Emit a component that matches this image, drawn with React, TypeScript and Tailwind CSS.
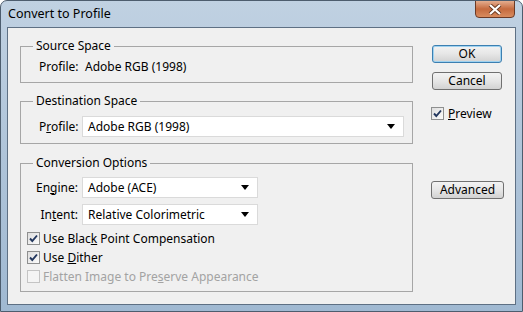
import React from "react"

const font = { fontFamily: '"Noto Sans", "Open Sans", sans-serif' }

function CheckBox({ checked, disabled }: { checked?: boolean; disabled?: boolean }) {
  return (
    <span
      className={
        "w-[13px] h-[13px] shrink-0 flex items-center justify-center border " +
        (disabled
          ? "border-[#c4c4c4] bg-[#f4f4f4]"
          : "border-[#8e8f8f] bg-gradient-to-br from-[#dedede] to-[#fbfbfb]")
      }
    >
      {checked && (
        <svg width="11" height="11" viewBox="0 0 11 11">
          <path d="M2 5.5 L4.3 8 L9 2.5" fill="none" stroke="#23375e" strokeWidth="1.9" />
        </svg>
      )}
    </span>
  )
}

function Button({ label, primary, w }: { label: string; primary?: boolean; w: string }) {
  return (
    <div
      className={
        "h-[18px] rounded-[3px] border flex items-center justify-center text-[12px] leading-none bg-gradient-to-b from-[#f3f3f3] via-[#e6e6e6] to-[#d2d2d2] " +
        w +
        (primary ? " border-[#3c7fb1] shadow-[inset_0_0_0_1px_#9fd2f0]" : " border-[#707070]")
      }
    >
      {label}
    </div>
  )
}

function Select({ value, w }: { value: string; w: string }) {
  return (
    <div className={"h-[21px] bg-white border border-[#dadada] flex items-center justify-between pl-[5px] pr-[8px] " + w}>
      <span>{value}</span>
      <svg width="8" height="5" viewBox="0 0 8 5">
        <path d="M0 0 H8 L4 5 Z" fill="#000" />
      </svg>
    </div>
  )
}

function Group({ title, h, children }: { title: string; h: string; children: React.ReactNode }) {
  return (
    <fieldset className={"w-[393px] border border-[#a6a6a6] " + h}>
      <legend className="ml-[12px] px-[3px] leading-[16px]">{title}</legend>
      {children}
    </fieldset>
  )
}

export default function App() {
  return (
    <div
      style={font}
      className="w-[523px] h-[312px] flex flex-col rounded-t-[7px] border border-[#4d5d6e] bg-gradient-to-b from-[#c0d1e2] via-[#afc4d9] to-[#a0b9d2] text-[12px] text-black overflow-hidden"
    >
      <div className="h-[26px] flex justify-between items-start pl-[7px] pr-[7px]">
        <span className="mt-[5px] leading-[16px] text-[12.5px]">Convert to Profile</span>
        <div className="mt-[-1px] w-[40px] h-[18px] rounded-b-[4px] border border-[#6b3a26] bg-gradient-to-b from-[#e4ad8e] via-[#c56a3e] to-[#d98c5f] flex items-center justify-center">
          <svg width="14" height="11" viewBox="0 0 14 11">
            <path d="M2 1 L12 10 M12 1 L2 10" stroke="#6a3a22" strokeWidth="4" />
            <path d="M2 1 L12 10 M12 1 L2 10" stroke="#fff" strokeWidth="2.2" />
          </svg>
        </div>
      </div>
      <div className="mx-[6px] mb-[6px] flex-1 border border-[#5e7084] bg-[#f0f0f0] flex">
        <div className="pl-[12px] pt-[10px] flex flex-col">
          <Group title="Source Space" h="h-[45px]">
            <div className="mt-[5px] pl-[18px] flex leading-[16px]">
              <span className="w-[46px]">Profile:</span>
              <span>Adobe RGB (1998)</span>
            </div>
          </Group>
          <div className="h-[10px]" />
          <Group title="Destination Space" h="h-[51px]">
            <div className="mt-[7px] pl-[18px] flex items-center">
              <span className="w-[43px]">
                P<u>r</u>ofile:
              </span>
              <Select value="Adobe RGB (1998)" w="w-[322px]" />
            </div>
          </Group>
          <div className="h-[11px]" />
          <Group title="Conversion Options" h="h-[137px]">
            <div className="mt-[6px] flex items-center">
              <span className="w-[57px] text-right">
                En<u>g</u>ine:
              </span>
              <Select value="Adobe (ACE)" w="ml-[4px] w-[176px]" />
            </div>
            <div className="mt-[6px] flex items-center">
              <span className="w-[57px] text-right">
                In<u>t</u>ent:
              </span>
              <Select value="Relative Colorimetric" w="ml-[4px] w-[176px]" />
            </div>
            <div className="mt-[4px] pl-[6px] flex flex-col">
              <div className="h-[19px] flex items-center gap-[3px]">
                <CheckBox checked />
                <span>
                  Use Blac<u>k</u> Point Compensation
                </span>
              </div>
              <div className="h-[19px] flex items-center gap-[3px]">
                <CheckBox checked />
                <span>
                  Use <u>D</u>ither
                </span>
              </div>
              <div className="h-[19px] flex items-center gap-[3px] text-[#a3a3a3]">
                <CheckBox disabled />
                <span>
                  Flatten Image to Pre<u>s</u>erve Appearance
                </span>
              </div>
            </div>
          </Group>
        </div>
        <div className="ml-[18px] pt-[17px] flex flex-col">
          <Button label="OK" primary w="w-[70px] ml-[1px]" />
          <div className="h-[9px]" />
          <Button label="Cancel" w="w-[70px] ml-[1px]" />
          <div className="mt-[17px] flex items-center gap-[4px] leading-[13px]">
            <CheckBox checked />
            <span>
              <u>P</u>review
            </span>
          </div>
          <div className="mt-[61px]">
            <Button label="Advanced" w="w-[73px]" />
          </div>
        </div>
      </div>
    </div>
  )
}
